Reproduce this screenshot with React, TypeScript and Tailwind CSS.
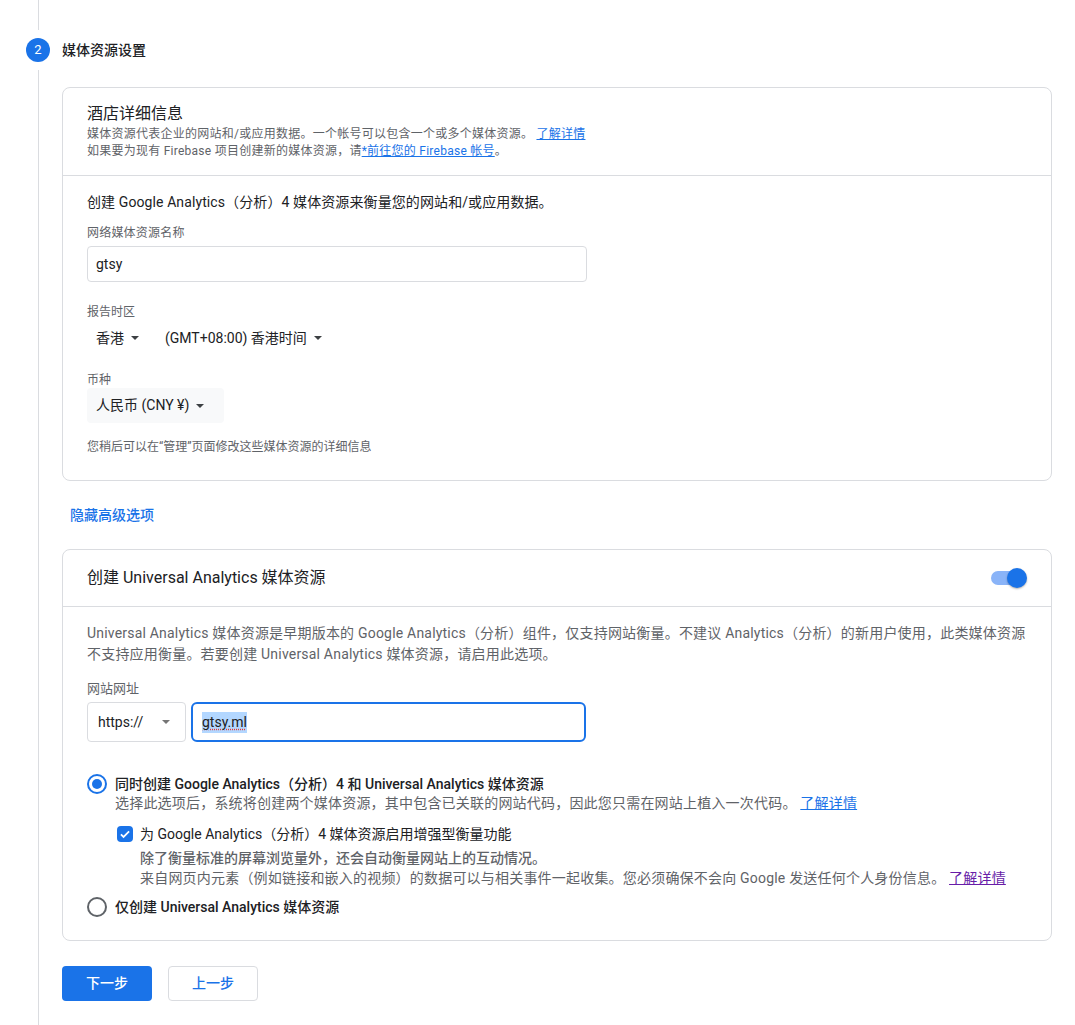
import React from 'react';

// 下拉小三角
const Caret = ({ className = '' }: { className?: string }) => (
  <svg viewBox="0 0 10 5" className={`w-[8px] h-[4px] ${className}`} fill="currentColor">
    <path d="M0 0l5 5 5-5z" />
  </svg>
);

const Radio = ({ checked }: { checked: boolean }) => (
  <span
    className={`w-5 h-5 shrink-0 rounded-full border-2 flex items-center justify-center ${
      checked ? 'border-[#1a73e8]' : 'border-[#5f6368]'
    }`}
  >
    {checked && <span className="w-[10px] h-[10px] rounded-full bg-[#1a73e8]" />}
  </span>
);

export default function App() {
  return (
    <div
      className="min-h-[1025px] bg-white flex pl-[26px] text-[#202124]"
      style={{ fontFamily: "Roboto, 'Noto Sans CJK SC', sans-serif" }}
    >
      {/* 左侧步骤线 */}
      <div className="w-6 flex flex-col items-center">
        <div className="w-px h-[30px] bg-[#dadce0]" />
        <div className="mt-2 w-6 h-6 rounded-full bg-[#1a73e8] text-white text-[13px] leading-6 text-center">
          2
        </div>
        <div className="w-px flex-1 mt-2 bg-[#dadce0]" />
      </div>

      <div className="ml-3 w-[990px] pb-6">
        <div className="mt-[38px] h-6 flex items-center text-[14px] font-medium">媒体资源设置</div>

        {/* 酒店详细信息 */}
        <div className="mt-[25px] border border-[#dadce0] rounded-lg">
          <div className="px-6 pt-[14px] pb-[15px] border-b border-[#dadce0]">
            <div className="text-[16px] leading-6">酒店详细信息</div>
            <div className="text-[12px] leading-[17px] text-[#5f6368] tracking-[0.25px]">
              媒体资源代表企业的网站和/或应用数据。一个帐号可以包含一个或多个媒体资源。{' '}
              <a className="text-[#1a73e8] underline">了解详情</a>
            </div>
            <div className="text-[12px] leading-[17px] text-[#5f6368] tracking-[0.25px]">
              如果要为现有 Firebase 项目创建新的媒体资源，请<a className="text-[#1a73e8] underline">*前往您的 Firebase 帐号</a>。
            </div>
          </div>
          <div className="px-6 pt-4 pb-[25px]">
            <div className="text-[14px] leading-5 tracking-[0.1px]">
              创建 Google Analytics（分析）4 媒体资源来衡量您的网站和/或应用数据。
            </div>
            <div className="mt-[13px] text-[12px] leading-4 text-[#5f6368] tracking-[0.2px]">网络媒体资源名称</div>
            <div className="mt-[5px] w-[500px] h-9 border border-[#dadce0] rounded flex items-center px-[8px] text-[14px]">
              gtsy
            </div>
            <div className="mt-[22px] text-[12px] leading-4 text-[#5f6368]">报告时区</div>
            <div className="h-9 flex items-center text-[14px]">
              <div className="h-9 px-[9px] flex items-center gap-[7px]">
                香港
                <Caret className="text-[#3c4043]" />
              </div>
              <div className="ml-[8px] h-9 px-[9px] flex items-center gap-[7px]">
                (GMT+08:00) 香港时间
                <Caret className="text-[#3c4043]" />
              </div>
            </div>
            <div className="mt-4 text-[12px] leading-4 text-[#5f6368]">币种</div>
            <div className="w-[137px] h-[35px] bg-[#f8f9fa] rounded px-[9px] flex items-center gap-[7px] text-[14px]">
              人民币 (CNY ¥)
              <Caret className="text-[#3c4043]" />
            </div>
            <div className="mt-4 text-[12px] leading-4 text-[#5f6368]">
              您稍后可以在“管理”页面修改这些媒体资源的详细信息
            </div>
          </div>
        </div>

        <div className="mt-6 ml-2 text-[14px] leading-5 font-medium text-[#1a73e8]">隐藏高级选项</div>

        {/* Universal Analytics */}
        <div className="mt-6 border border-[#dadce0] rounded-lg">
          <div className="h-[57px] px-6 flex items-center justify-between border-b border-[#dadce0]">
            <div className="text-[16px]">创建 Universal Analytics 媒体资源</div>
            <div className="relative w-9 h-5 flex items-center">
              <div className="w-[30px] h-[14px] rounded-full bg-[#8ab4f8]" />
              <div className="absolute right-0 top-0 w-5 h-5 rounded-full bg-[#1a73e8] shadow-[0_1px_2px_rgba(0,0,0,0.3)]" />
            </div>
          </div>
          <div className="px-6 pt-4 pb-[23px]">
            <div className="text-[14px] leading-[21px] text-[#5f6368] tracking-[0.2px]">
              Universal Analytics 媒体资源是早期版本的 Google Analytics（分析）组件，仅支持网站衡量。不建议 Analytics（分析）的新用户使用，此类媒体资源
              <br />
              不支持应用衡量。若要创建 Universal Analytics 媒体资源，请启用此选项。
            </div>
            <div className="mt-[14px] text-[13px] leading-5 text-[#5f6368]">网站网址</div>
            <div className="mt-[3px] flex gap-[5px]">
              <div className="w-[99px] h-10 border border-[#dadce0] rounded flex items-center justify-between pl-[10px] pr-[15px] text-[14px]">
                https://
                <Caret className="text-[#757575]" />
              </div>
              <div className="w-[395px] h-10 border-2 border-[#1a73e8] rounded-md flex items-center pl-[9px] text-[14px]">
                <span className="bg-[#b3d7ff] underline decoration-dotted decoration-[#e53935] underline-offset-2">
                  gtsy.ml
                </span>
              </div>
            </div>

            <div className="mt-8">
              <div className="flex gap-2">
                <Radio checked />
                <div>
                  <div className="text-[14px] leading-5 font-medium">
                    同时创建 Google Analytics（分析）4 和 Universal Analytics 媒体资源
                  </div>
                  <div className="text-[14px] leading-[18px] text-[#5f6368] tracking-[0.2px]">
                    选择此选项后，系统将创建两个媒体资源，其中包含已关联的网站代码，因此您只需在网站上植入一次代码。{' '}
                    <a className="text-[#1a73e8] underline">了解详情</a>
                  </div>
                  <div className="mt-3 flex items-start gap-[7px] ml-[2px]">
                    <span className="mt-[2px] w-4 h-4 shrink-0 rounded-sm bg-[#1a73e8] flex items-center justify-center">
                      <svg viewBox="0 0 24 24" className="w-[14px] h-[14px]" fill="none" stroke="white" strokeWidth="3">
                        <path d="M5 12.5l4.5 4.5L19 7.5" />
                      </svg>
                    </span>
                    <div>
                      <div className="text-[14px] leading-5">为 Google Analytics（分析）4 媒体资源启用增强型衡量功能</div>
                      <div className="mt-1 text-[14px] leading-5 font-medium text-[#5f6368]">
                        除了衡量标准的屏幕浏览量外，还会自动衡量网站上的互动情况。
                      </div>
                      <div className="text-[14px] leading-5 text-[#5f6368] whitespace-nowrap tracking-[0.2px]">
                        来自网页内元素（例如链接和嵌入的视频）的数据可以与相关事件一起收集。您必须确保不会向 Google 发送任何个人身份信息。{' '}
                        <a className="text-[#681da8] underline">了解详情</a>
                      </div>
                    </div>
                  </div>
                </div>
              </div>
              <div className="mt-[9px] flex gap-2">
                <Radio checked={false} />
                <div className="text-[14px] leading-5 font-medium">仅创建 Universal Analytics 媒体资源</div>
              </div>
            </div>
          </div>
        </div>

        <div className="mt-[25px] flex gap-4">
          <button className="w-[90px] h-[35px] rounded bg-[#1a73e8] text-white text-[14px] font-medium">下一步</button>
          <button className="w-[90px] h-[35px] rounded border border-[#dadce0] text-[#1a73e8] text-[14px] font-medium">
            上一步
          </button>
        </div>
      </div>
    </div>
  );
}
